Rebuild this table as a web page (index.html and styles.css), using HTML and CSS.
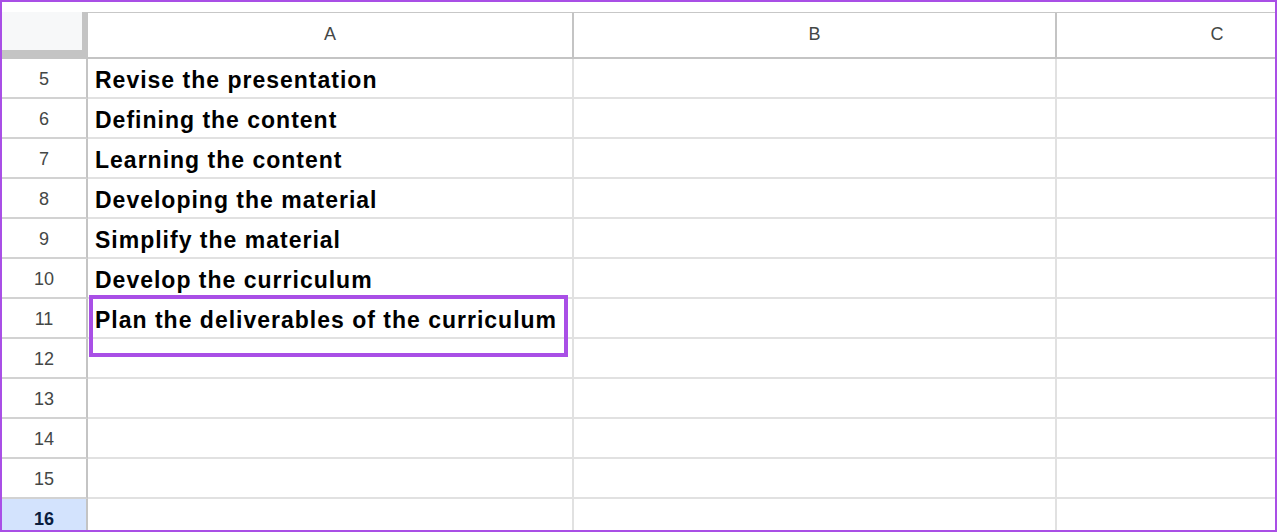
FILE: index.html
```html
<!DOCTYPE html>
<html>
<head>
<meta charset="utf-8">
<link rel="stylesheet" href="styles.css">
</head>
<body>
<div class="frame">
  <div class="sheet">
    <div class="corner"><div class="corner-fill"></div></div>
    <div class="colhead">A</div>
    <div class="colhead">B</div>
    <div class="colhead last">C</div>

    <div class="rowhead">5</div><div class="cell">Revise the presentation</div><div class="cell"></div><div class="cell last"></div>
    <div class="rowhead">6</div><div class="cell">Defining the content</div><div class="cell"></div><div class="cell last"></div>
    <div class="rowhead">7</div><div class="cell">Learning the content</div><div class="cell"></div><div class="cell last"></div>
    <div class="rowhead">8</div><div class="cell">Developing the material</div><div class="cell"></div><div class="cell last"></div>
    <div class="rowhead">9</div><div class="cell">Simplify the material</div><div class="cell"></div><div class="cell last"></div>
    <div class="rowhead">10</div><div class="cell">Develop the curriculum</div><div class="cell"></div><div class="cell last"></div>
    <div class="rowhead">11</div><div class="cell selected">Plan the deliverables of the curriculum<div class="highlight"></div></div><div class="cell"></div><div class="cell last"></div>
    <div class="rowhead">12</div><div class="cell"></div><div class="cell"></div><div class="cell last"></div>
    <div class="rowhead">13</div><div class="cell"></div><div class="cell"></div><div class="cell last"></div>
    <div class="rowhead">14</div><div class="cell"></div><div class="cell"></div><div class="cell last"></div>
    <div class="rowhead">15</div><div class="cell"></div><div class="cell"></div><div class="cell last"></div>
    <div class="rowhead active">16</div><div class="cell"></div><div class="cell"></div><div class="cell last"></div>
  </div>
</div>
</body>
</html>
```

FILE: styles.css
```css
html, body {
  margin: 0;
  padding: 0;
  background: #ffffff;
}

.frame {
  width: 1277px;
  height: 532px;
  box-sizing: border-box;
  border: 2px solid #a94fe6;
  overflow: hidden;
  background: #ffffff;
  padding-top: 10px;
}

.sheet {
  display: grid;
  grid-template-columns: 86px 486px 483px 320px;
  grid-template-rows: 46px repeat(12, 40px);
  border-top: 1px solid #c7c7c7;
  font-family: "Liberation Sans", Arial, sans-serif;
}

.corner {
  background: #c4c4c4;
  padding: 0 6px 7px 0;
  border-bottom: 2px solid #c4c4c4;
  box-sizing: border-box;
  margin-top: -1px;
}

.corner-fill {
  background: #f7f8f9;
  height: 100%;
}

.colhead {
  display: flex;
  align-items: center;
  justify-content: center;
  font-size: 18px;
  color: #444746;
  border-right: 2px solid #c4c4c4;
  border-bottom: 2px solid #c4c4c4;
  box-sizing: border-box;
  padding-bottom: 2px;
}

.colhead.last {
  border-right: none;
}

.rowhead {
  display: flex;
  align-items: center;
  justify-content: center;
  font-size: 18px;
  color: #444746;
  border-right: 2px solid #c4c4c4;
  border-bottom: 2px solid #d2d2d2;
  box-sizing: border-box;
  padding-top: 2px;
}

.rowhead.active {
  background: #d3e3fd;
  color: #0a1d3f;
  font-weight: bold;
}

.cell {
  position: relative;
  display: flex;
  align-items: center;
  padding-left: 7px;
  font-size: 23px;
  letter-spacing: 1px;
  font-weight: bold;
  color: #000000;
  border-right: 2px solid #e1e1e1;
  border-bottom: 2px solid #e1e1e1;
  box-sizing: border-box;
  white-space: nowrap;
  padding-top: 5px;
}

.cell.last {
  border-right: none;
}

.cell.selected {
  z-index: 1;
}

.highlight {
  position: absolute;
  left: 1px;
  top: -4px;
  width: 479px;
  height: 62px;
  box-sizing: border-box;
  border: 4px solid #a94fe6;
  pointer-events: none;
}
```
